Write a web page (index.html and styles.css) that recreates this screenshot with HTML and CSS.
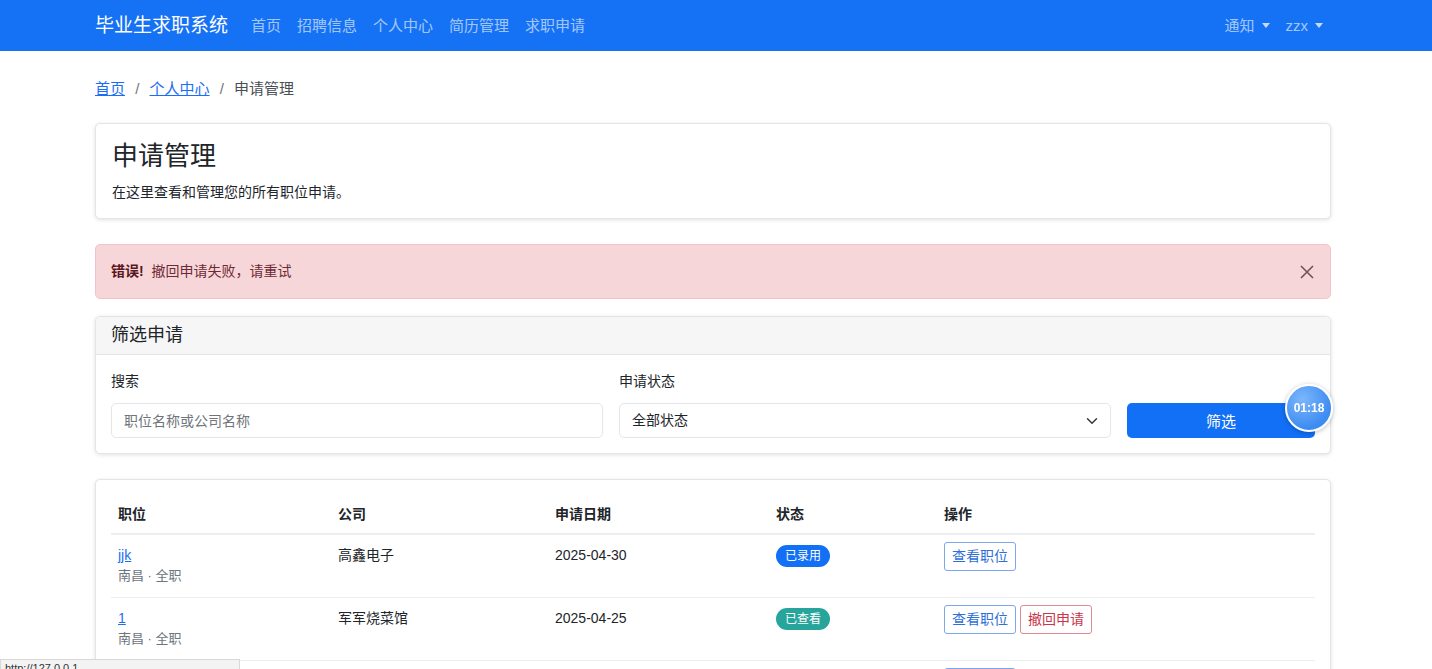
FILE: index.html
```html
<!DOCTYPE html>
<html lang="zh-CN">
<head>
    <meta charset="UTF-8">
    <meta name="viewport" content="width=device-width, initial-scale=1.0">
    <title>申请管理 | 毕业生求职系统</title>
    <link rel="stylesheet" href="styles.css">
</head>
<body>

<!-- Top navigation -->
<nav class="navbar">
    <div class="container nav-inner">
        <a class="brand" href="#">毕业生求职系统</a>
        <ul class="nav-links">
            <li><a href="#">首页</a></li>
            <li><a href="#">招聘信息</a></li>
            <li><a href="#">个人中心</a></li>
            <li><a href="#">简历管理</a></li>
            <li><a href="#">求职申请</a></li>
        </ul>
        <ul class="nav-links nav-right">
            <li><a href="#" class="dropdown">通知</a></li>
            <li><a href="#" class="dropdown">zzx</a></li>
        </ul>
    </div>
</nav>

<div class="container main">
    <!-- Breadcrumb -->
    <div class="breadcrumb">
        <a href="#">首页</a>
        <span class="sep">/</span>
        <a href="#">个人中心</a>
        <span class="sep">/</span>
        <span class="current">申请管理</span>
    </div>

    <!-- Page header -->
    <div class="card page-head">
        <h1>申请管理</h1>
        <p>在这里查看和管理您的所有职位申请。</p>
    </div>

    <!-- Error alert -->
    <div class="alert">
        <span><strong>错误!</strong>&nbsp;&nbsp;撤回申请失败，请重试</span>
        <button class="alert-close" aria-label="关闭">
            <svg width="16" height="16" viewBox="0 0 16 16"><path d="M2 2 L14 14 M14 2 L2 14" stroke="currentColor" stroke-width="1.6" fill="none"/></svg>
        </button>
    </div>

    <!-- Filter -->
    <div class="card filter-card">
        <div class="card-header">筛选申请</div>
        <div class="card-body filter-row">
            <div class="field">
                <label for="search">搜索</label>
                <input type="text" id="search" placeholder="职位名称或公司名称">
            </div>
            <div class="field">
                <label for="status">申请状态</label>
                <div class="select">
                    <span>全部状态</span>
                    <svg width="12" height="12" viewBox="0 0 16 16"><path d="M2 5 L8 11 L14 5" stroke="#343a40" stroke-width="2" fill="none" stroke-linecap="round" stroke-linejoin="round"/></svg>
                </div>
            </div>
            <div class="field field-btn">
                <button class="btn-primary">筛选</button>
            </div>
        </div>
    </div>

    <!-- Applications table -->
    <div class="card table-card">
        <table>
            <thead>
                <tr>
                    <th class="c-job">职位</th>
                    <th class="c-company">公司</th>
                    <th class="c-date">申请日期</th>
                    <th class="c-status">状态</th>
                    <th>操作</th>
                </tr>
            </thead>
            <tbody>
                <tr>
                    <td><a href="#">jjk</a><div class="sub">南昌 · 全职</div></td>
                    <td>高鑫电子</td>
                    <td>2025-04-30</td>
                    <td><span class="badge badge-blue">已录用</span></td>
                    <td><button class="btn-sm btn-outline">查看职位</button></td>
                </tr>
                <tr>
                    <td><a href="#">1</a><div class="sub">南昌 · 全职</div></td>
                    <td>军军烧菜馆</td>
                    <td>2025-04-25</td>
                    <td><span class="badge badge-teal">已查看</span></td>
                    <td><button class="btn-sm btn-outline">查看职位</button> <button class="btn-sm btn-outline-danger">撤回申请</button></td>
                </tr>
                <tr>
                    <td><a href="#">java</a><div class="sub">南昌 · 全职</div></td>
                    <td>高鑫电子</td>
                    <td>2025-04-20</td>
                    <td><span class="badge badge-blue">面试</span></td>
                    <td><button class="btn-sm btn-outline">查看职位</button></td>
                </tr>
            </tbody>
        </table>
    </div>
</div>

<!-- Recording timer bubble -->
<div class="timer">01:18</div>

<!-- Browser status bar -->
<div class="statusbar">http://127.0.0.1</div>

</body>
</html>
```

FILE: styles.css
```css
* {
    box-sizing: border-box;
}
body {
    margin: 0;
    font-family: "Liberation Sans", "Noto Sans CJK SC", sans-serif;
    font-size: 14px;
    line-height: 21px;
    color: #212529;
    background-color: #ffffff;
}
a {
    color: #1a6ef5;
}
.container {
    width: 1236px;
    margin-left: calc(50% - 621px);
}

/* navbar */
.navbar {
    background-color: #1672f5;
    height: 51px;
}
.nav-inner {
    display: flex;
    align-items: center;
    height: 51px;
}
.brand {
    color: #ffffff;
    font-size: 19px;
    text-decoration: none;
    margin-right: 15px;
}
.nav-links {
    display: flex;
    list-style: none;
    margin: 0;
    padding: 0;
}
.nav-links a {
    display: block;
    padding: 0 8px;
    font-size: 15px;
    color: rgba(255, 255, 255, 0.62);
    text-decoration: none;
}
.nav-right {
    margin-left: auto;
}
.dropdown::after {
    content: "";
    display: inline-block;
    margin-left: 7px;
    vertical-align: 3px;
    border-top: 5px solid rgba(255, 255, 255, 0.75);
    border-left: 4.5px solid transparent;
    border-right: 4.5px solid transparent;
}

/* breadcrumb */
.main {
    padding-top: 27px;
}
.breadcrumb {
    font-size: 15px;
    color: #4a4f55;
    margin-bottom: 24px;
}
.breadcrumb .sep {
    color: #6c757d;
    margin: 0 6px;
}

/* cards */
.card {
    border: 1px solid #e3e5e8;
    border-radius: 5px;
    box-shadow: 0 1px 4px rgba(0, 0, 0, 0.12);
    background-color: #ffffff;
}
.page-head {
    padding: 17px 16px 15px;
}
.page-head h1 {
    font-size: 26px;
    font-weight: 400;
    line-height: 31px;
    margin: 0 0 10px;
}
.page-head p {
    margin: 0;
}

/* alert */
.alert {
    margin-top: 25px;
    display: flex;
    align-items: center;
    justify-content: space-between;
    padding: 16px 15px;
    background-color: #f7d6da;
    border: 1px solid #f2c4ca;
    border-radius: 5px;
    color: #6e2a34;
}
.alert strong {
    color: #5a1620;
}
.alert-close {
    border: none;
    background: none;
    padding: 0;
    color: #6e545a;
    display: flex;
    cursor: pointer;
}

/* filter */
.filter-card {
    margin-top: 17px;
}
.card-header {
    background-color: #f6f6f7;
    border-bottom: 1px solid #e3e5e8;
    border-radius: 5px 5px 0 0;
    padding: 8px 15px;
    font-size: 18px;
    line-height: 21px;
}
.card-body {
    padding: 16px 15px 15px;
}
.filter-row {
    display: grid;
    grid-template-columns: 492px 492px 1fr;
    gap: 16px;
    align-items: end;
}
.field label {
    display: block;
    margin-bottom: 11px;
}
.field input,
.select {
    width: 100%;
    height: 35px;
    border: 1px solid #e4e6e9;
    border-radius: 5px;
    padding: 0 12px;
    font-family: inherit;
    font-size: 14px;
    color: #212529;
}
.field input::placeholder {
    color: #6f757b;
}
.select {
    display: flex;
    align-items: center;
    justify-content: space-between;
}
.btn-primary {
    width: 100%;
    height: 35px;
    border: none;
    border-radius: 5px;
    background-color: #1170f5;
    color: #ffffff;
    font-family: inherit;
    font-size: 15px;
}

/* table */
.table-card {
    margin-top: 25px;
    padding: 16px 15px 0;
    margin-bottom: 40px;
}
table {
    width: 100%;
    border-collapse: collapse;
}
th, td {
    text-align: left;
    vertical-align: top;
    padding: 10px 8px 11px 7px;
}
th {
    padding: 8px 8px 8px 7px;
    font-weight: 700;
    border-bottom: 2px solid #eceef0;
}
td {
    border-bottom: 1px solid #eceef0;
}
.c-job { width: 220px; }
.c-company { width: 217px; }
.c-date { width: 221px; }
.c-status { width: 168px; }
.sub {
    font-size: 13px;
    line-height: 20px;
    color: #6c757d;
}
.badge {
    display: inline-block;
    padding: 0 9px;
    font-size: 12px;
    line-height: 22px;
    border-radius: 11px;
    color: #ffffff;
}
.badge-blue {
    background-color: #1170f5;
}
.badge-teal {
    background-color: #27a59c;
}
.btn-sm {
    margin-top: -3px;
    padding: 3px 7px;
    font-family: inherit;
    font-size: 14px;
    line-height: 21px;
    background: #ffffff;
    border-radius: 3px;
}
.btn-outline {
    border: 1px solid #7da7ec;
    color: #2f6fd8;
}
.btn-outline-danger {
    border: 1px solid #e08a95;
    color: #c9354a;
}

/* overlays */
.timer {
    position: fixed;
    left: 1285px;
    top: 384px;
    width: 48px;
    height: 48px;
    border-radius: 50%;
    border: 2px solid #ffffff;
    background: radial-gradient(circle at 35% 30%, #7cb6fb, #3d8cf2 70%);
    box-shadow: 0 1px 5px rgba(0, 0, 0, 0.25);
    color: #ffffff;
    font-size: 12px;
    font-weight: 700;
    display: flex;
    align-items: center;
    justify-content: center;
}
.statusbar {
    position: fixed;
    left: 0;
    bottom: -9px;
    width: 240px;
    height: 19px;
    padding-left: 4px;
    background-color: #f3f3f3;
    border: 1px solid #d8d8d8;
    font-size: 11px;
    line-height: 17px;
    color: #333;
}
```
